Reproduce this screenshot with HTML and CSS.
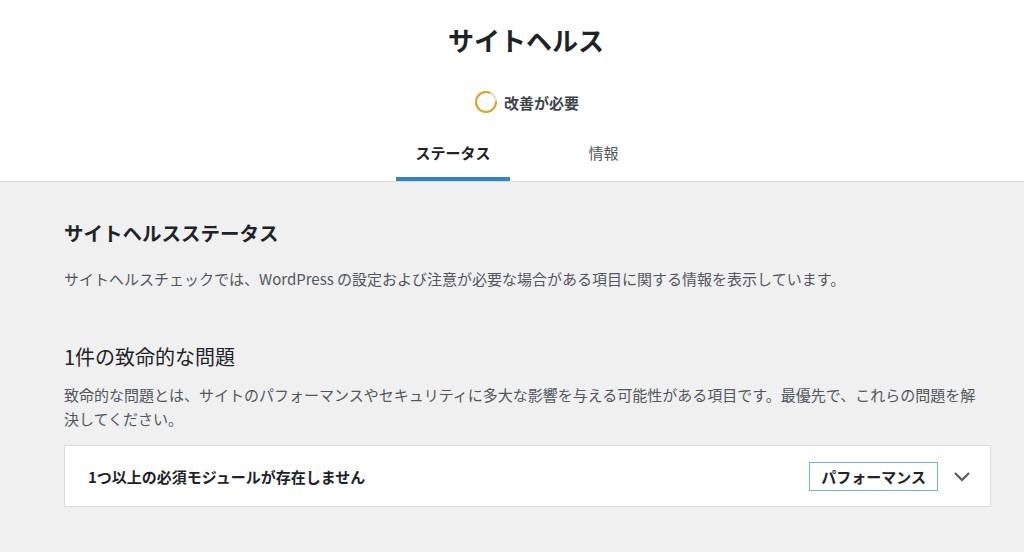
FILE: index.html
```html
<!DOCTYPE html>
<html lang="ja">
<head>
    <meta charset="UTF-8">
    <meta name="viewport" content="width=device-width, initial-scale=1.0">
    <title>サイトヘルス</title>
    <link rel="stylesheet" href="styles.css">
</head>
<body>

<header class="health-header">
    <h1 class="health-title">サイトヘルス</h1>

    <div class="health-status">
        <svg class="health-ring" width="22" height="22" viewBox="0 0 22 22">
            <circle cx="11" cy="11" r="10" fill="none" stroke="#dcdcde" stroke-width="2"/>
            <circle cx="11" cy="11" r="10" fill="none" stroke="#dba617" stroke-width="2"
                    stroke-dasharray="52 100" transform="rotate(-5 11 11)"/>
        </svg>
        <span>改善が必要</span>
    </div>

    <nav class="health-tabs">
        <a href="#" class="active">ステータス</a>
        <a href="#">情報</a>
    </nav>
</header>

<main class="health-body">
    <h2 class="section-title">サイトヘルスステータス</h2>
    <p class="section-text">サイトヘルスチェックでは、WordPress の設定および注意が必要な場合がある項目に関する情報を表示しています。</p>

    <h3 class="issues-title">1件の致命的な問題</h3>
    <p class="issues-text">致命的な問題とは、サイトのパフォーマンスやセキュリティに多大な影響を与える可能性がある項目です。最優先で、これらの問題を解決してください。</p>

    <div class="issue-item">
        <span class="issue-label">1つ以上の必須モジュールが存在しません</span>
        <span class="badge">パフォーマンス</span>
        <svg class="chevron" width="18" height="12" viewBox="0 0 18 12">
            <path d="M2 3 L9 10 L16 3" fill="none" stroke="#50575e" stroke-width="2"/>
        </svg>
    </div>
</main>

</body>
</html>
```

FILE: styles.css
```css
body {
    margin: 0;
    padding: 0;
    background-color: #f0f0f1;
    color: #1d2327;
    font-family: "Noto Sans CJK JP", "Noto Sans", sans-serif;
}
.health-header {
    background-color: #fff;
    border-bottom: 1px solid #dcdcde;
    padding-top: 23px;
    text-align: center;
}
.health-title {
    margin: 0;
    padding-left: 28px;
    font-size: 26px;
    line-height: 34px;
    font-weight: 700;
}
.health-status {
    display: flex;
    justify-content: center;
    align-items: center;
    gap: 7px;
    margin-top: 34px;
    padding-left: 30px;
    height: 22px;
    font-size: 15px;
    font-weight: 600;
    color: #3c434a;
}
.health-tabs {
    display: flex;
    justify-content: center;
    gap: 60px;
    margin-top: 28px;
    padding-left: 10px;
}
.health-tabs a {
    display: block;
    padding: 0 19px 12px;
    font-size: 15px;
    line-height: 24px;
    color: #50575e;
    text-decoration: none;
    border-bottom: 4px solid transparent;
}
.health-tabs a.active {
    color: #1d2327;
    font-weight: 600;
    border-bottom-color: #3582c4;
}
.health-body {
    width: 927px;
    margin: 0 0 0 64px;
    padding-top: 37px;
}
.section-title {
    margin: 0;
    font-size: 19.5px;
    line-height: 28px;
    font-weight: 700;
}
.section-text {
    margin: 21px 0 0;
    font-size: 15px;
    line-height: 22px;
    color: #50575e;
}
.issues-title {
    margin: 53px 0 0;
    font-size: 20px;
    line-height: 28px;
    font-weight: 400;
}
.issues-text {
    max-width: 918px;
    margin: 12px 0 0;
    font-size: 15px;
    line-height: 24px;
    color: #50575e;
}
.issue-item {
    display: flex;
    align-items: center;
    margin-top: 14px;
    height: 60px;
    padding: 0 19px 0 23px;
    background: #fff;
    border: 1px solid #dcdcde;
    box-shadow: 0 1px 0 #dcdcde;
}
.issue-label {
    flex: 1;
    font-size: 15px;
    font-weight: 700;
    color: #1d2327;
}
.badge {
    padding: 0 11px;
    height: 27px;
    line-height: 27px;
    font-size: 15px;
    font-weight: 700;
    border: 1px solid #72aee6;
}
.chevron {
    margin-left: 15px;
}
```
